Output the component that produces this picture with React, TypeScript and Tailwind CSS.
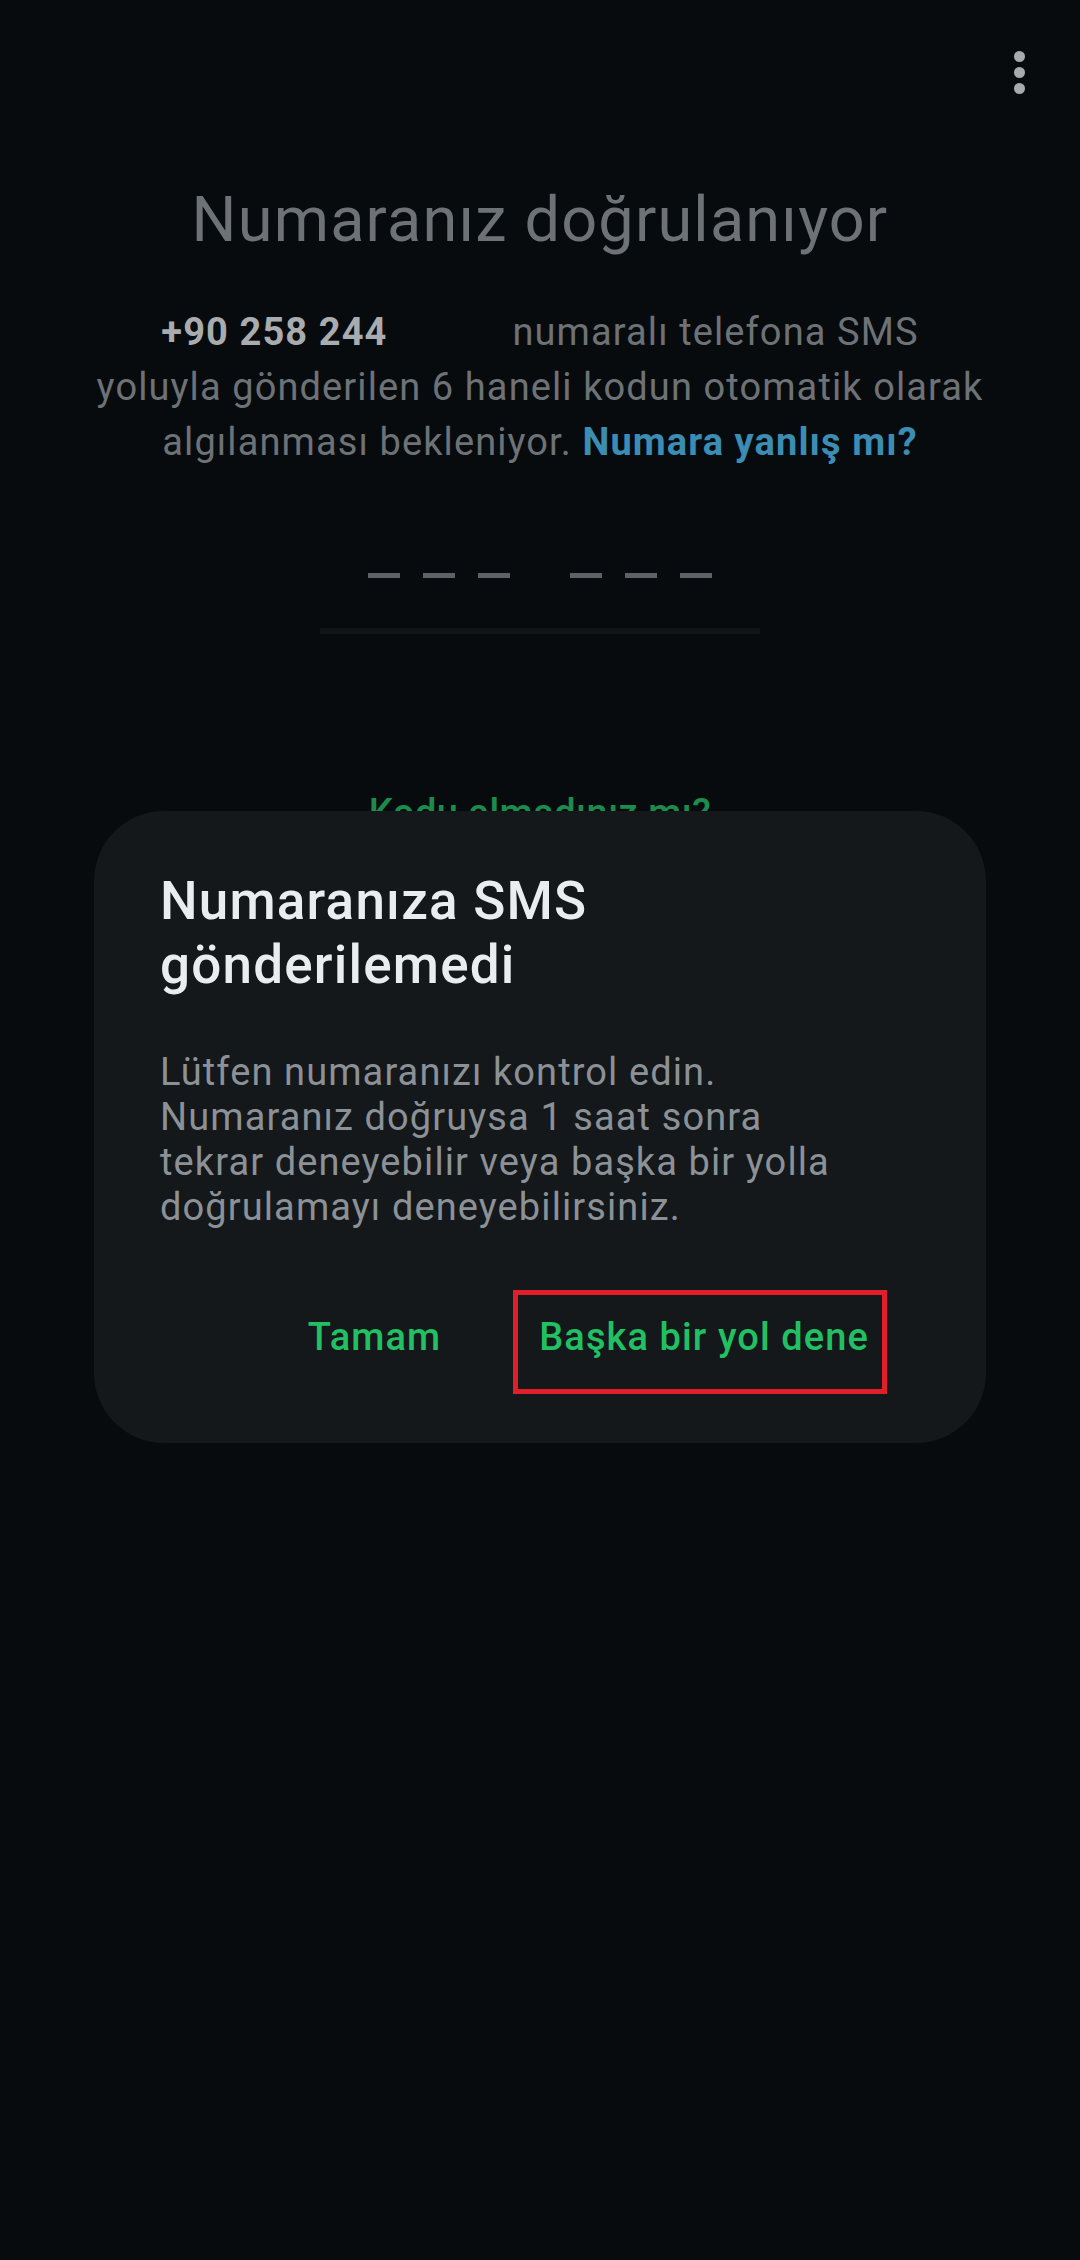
import React from "react";

export default function App() {
  return (
    <div
      className="relative w-[1080px] h-[2260px] overflow-hidden bg-[#080b0e]"
      style={{ fontFamily: "Roboto, 'Noto Sans', sans-serif" }}
    >
      {/* header with overflow menu */}
      <div className="h-[182px] flex justify-end items-start pt-[51px] pr-[55px]">
        <div className="flex flex-col gap-[5px]">
          <div className="w-[11px] h-[11px] rounded-full bg-[#a8abae]" />
          <div className="w-[11px] h-[11px] rounded-full bg-[#a8abae]" />
          <div className="w-[11px] h-[11px] rounded-full bg-[#a8abae]" />
        </div>
      </div>

      <div className="flex flex-col items-center">
        <h1 className="text-[63px] leading-[76px] font-normal tracking-[1.2px] text-[#6d7276]">
          Numaranız doğrulanıyor
        </h1>

        <p className="mt-[47px] text-center text-[38px] leading-[55px] tracking-[1.1px] text-[#6d7276]">
          <span className="font-bold text-[#a9acaf]">+90 258 244</span>
          <span className="inline-block w-[125px]" />
          numaralı telefona SMS
          <br />
          yoluyla gönderilen 6 haneli kodun otomatik olarak
          <br />
          algılanması bekleniyor.{" "}
          <span className="font-bold text-[#3b8db4]">Numara yanlış mı?</span>
        </p>

        <div className="mt-[103px] flex items-center gap-[60px]">
          <div className="flex gap-[23px]">
            <div className="w-[32px] h-[5px] bg-[#5e6267]" />
            <div className="w-[32px] h-[5px] bg-[#5e6267]" />
            <div className="w-[32px] h-[5px] bg-[#5e6267]" />
          </div>
          <div className="flex gap-[23px]">
            <div className="w-[32px] h-[5px] bg-[#5e6267]" />
            <div className="w-[32px] h-[5px] bg-[#5e6267]" />
            <div className="w-[32px] h-[5px] bg-[#5e6267]" />
          </div>
        </div>

        <div className="mt-[50px] w-[440px] h-[6px] bg-[#101417]" />

        <div className="mt-[157px] text-[38px] leading-[45px] font-medium tracking-[0.5px] text-[#1b8c4c]">
          Kodu almadınız mı?
        </div>
      </div>

      {/* dialog */}
      <div className="absolute left-[94px] top-[811px] w-[892px] h-[632px] rounded-[70px] bg-[#14181b] flex flex-col pl-[66px] pt-[58px]">
        <h2 className="text-[53px] leading-[64px] font-medium tracking-[1.2px] text-[#e9edef]">
          Numaranıza SMS
          <br />
          gönderilemedi
        </h2>
        <p className="mt-[53px] text-[38px] leading-[45px] tracking-[1.1px] text-[#8b9196]">
          Lütfen numaranızı kontrol edin.
          <br />
          Numaranız doğruysa 1 saat sonra
          <br />
          tekrar deneyebilir veya başka bir yolla
          <br />
          doğrulamayı deneyebilirsiniz.
        </p>
        <div className="mt-[60px] flex justify-end items-start gap-[72px] pr-[99px]">
          <div className="mt-[25px] text-[38px] leading-[45px] font-medium tracking-[1.1px] text-[#21c063]">
            Tamam
          </div>
          <div className="border-[5px] border-[#e01f2b] pl-[21px] pr-[13px] pt-[20px] pb-[29px] text-[38px] leading-[45px] font-medium tracking-[1.1px] text-[#21c063]">
            Başka bir yol dene
          </div>
        </div>
      </div>
    </div>
  );
}
